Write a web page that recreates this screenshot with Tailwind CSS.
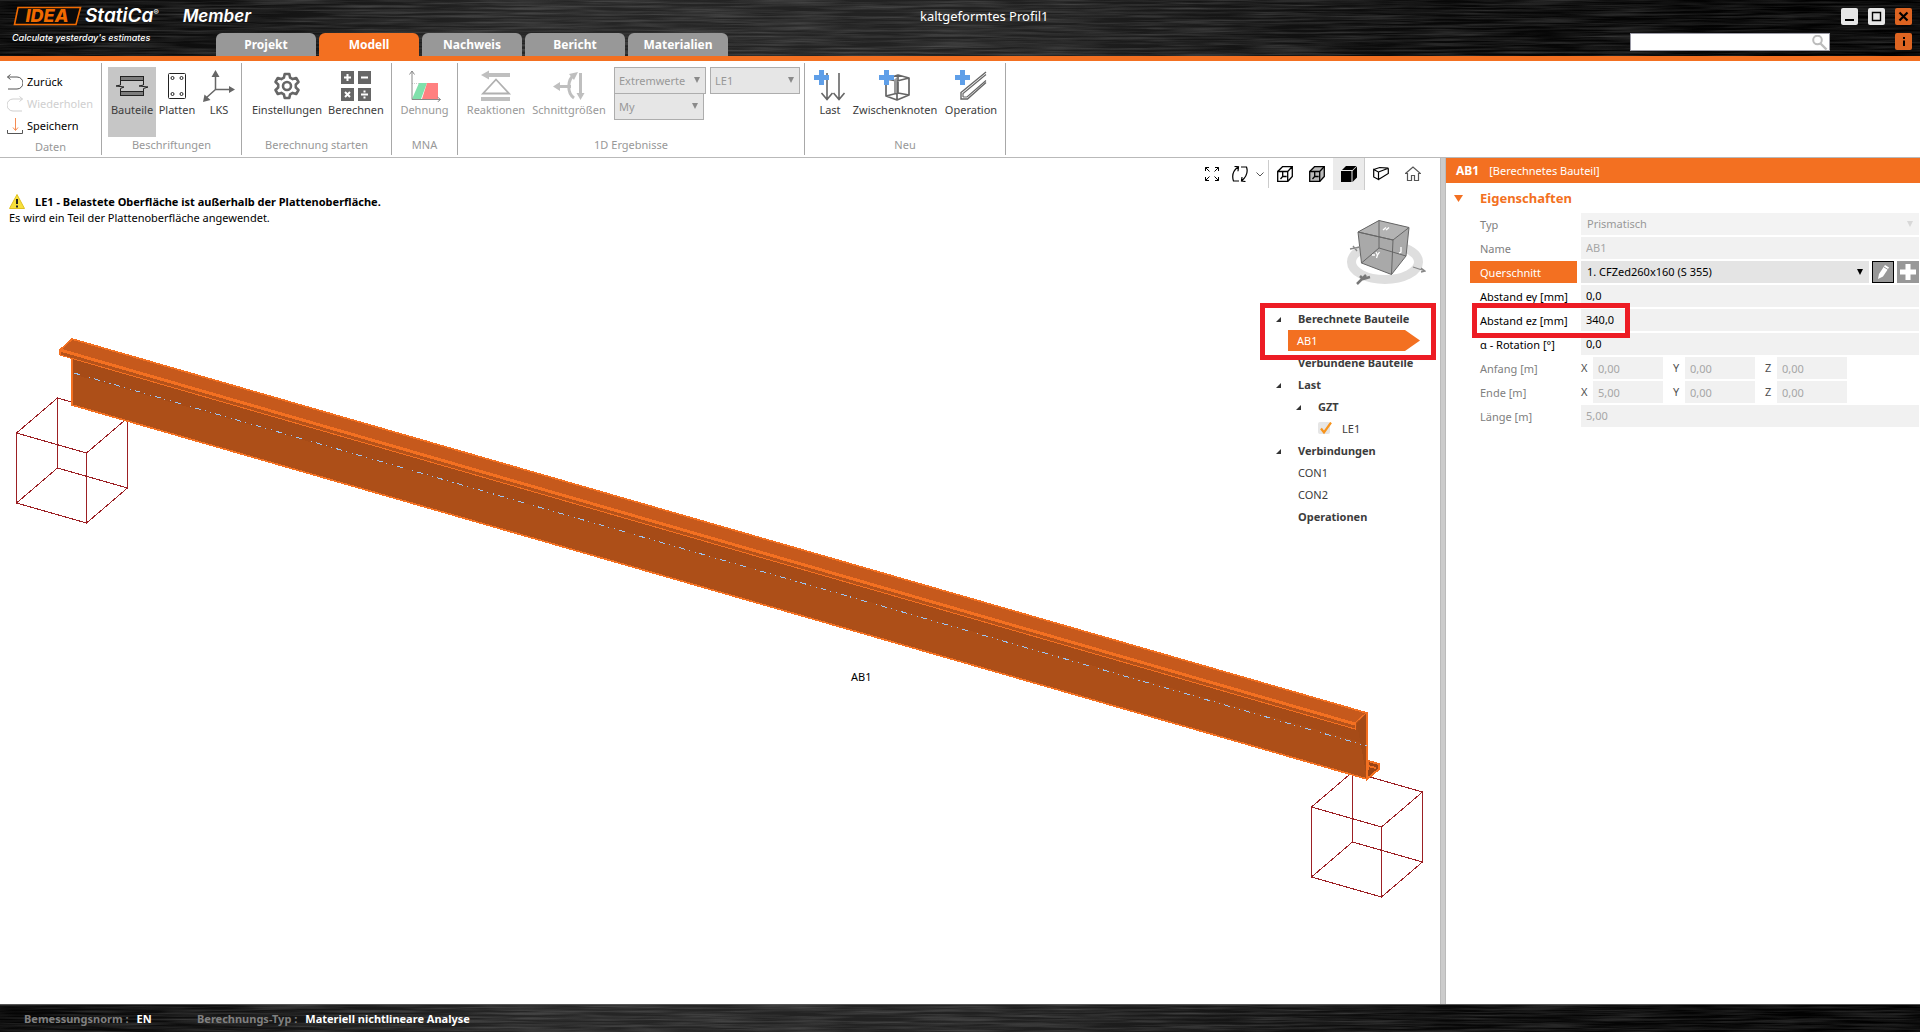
<!DOCTYPE html>
<html lang="de">
  <head>
    <meta charset="UTF-8" />
    <meta name="viewport" content="width=device-width, initial-scale=1.0" />
    <title>IDEA StatiCa Member</title>
    <script src="https://cdn.jsdelivr.net/npm/@tailwindcss/browser@4"></script>
  </head>
  <body class="h-screen flex flex-col overflow-hidden bg-white font-['Noto_Sans','Open_Sans',sans-serif] text-[11px] leading-4 text-[#3c3c3c]">

    <!-- Title bar -->
    <header class="relative shrink-0 h-[61px] flex bg-black border-b-5 border-[#f37021] text-white">
      <svg class="absolute inset-0 w-full h-full" aria-hidden="true">
        <defs>
          <filter id="brushed" x="0" y="0" width="100%" height="100%">
            <feTurbulence type="fractalNoise" baseFrequency="0.012 0.5" numOctaves="3" seed="4" />
            <feColorMatrix values="0 0 0 0 1  0 0 0 0 1  0 0 0 0 1  1.3 0 0 0 -0.45" />
          </filter>
          <linearGradient id="sheen">
            <stop offset="0" stop-color="#040404" />
            <stop offset="0.12" stop-color="#101010" />
            <stop offset="0.27" stop-color="#262626" />
            <stop offset="0.55" stop-color="#202020" />
            <stop offset="0.75" stop-color="#080808" />
            <stop offset="1" stop-color="#000000" />
          </linearGradient>
        </defs>
        <rect width="100%" height="100%" fill="url(#sheen)" />
        <rect width="100%" height="100%" filter="url(#brushed)" opacity="0.25" />
      </svg>

      <div class="relative w-[216px] pl-3 pt-1.5">
        <div class="flex items-center h-5 whitespace-nowrap font-[Inter,sans-serif] italic font-semibold">
          <div class="relative shrink-0 w-[70px] h-5">
            <svg class="absolute inset-0 w-[70px] h-5" viewBox="0 0 70 20">
              <path d="M6 1.500H68.500L64 18.500H2.500z" fill="#0a0a0a" stroke="#f06a00" stroke-width="1.600" />
            </svg>
            <span class="relative block text-center text-[18px] leading-5 font-extrabold text-[#f06a00]">IDEA</span>
          </div>
          <span class="ml-[3px] text-[19px] leading-5">StatiCa</span><sup class="text-[8px]">®</sup>
          <span class="ml-6 text-[17px] leading-5">Member</span>
        </div>
        <p class="mt-1 text-[9px] leading-4 italic font-medium font-[Inter,sans-serif]">Calculate yesterday's estimates</p>
      </div>

      <nav class="relative flex items-end gap-[3px] font-bold text-[12px] text-center">
        <a href="#" class="w-[100px] h-[23px] pt-1 rounded-t-md bg-[#989898]">Projekt</a>
        <a href="#" class="w-[100px] h-[23px] pt-1 rounded-t-md bg-[#f37021]">Modell</a>
        <a href="#" class="w-[100px] h-[23px] pt-1 rounded-t-md bg-[#989898]">Nachweis</a>
        <a href="#" class="w-[100px] h-[23px] pt-1 rounded-t-md bg-[#989898]">Bericht</a>
        <a href="#" class="w-[100px] h-[23px] pt-1 rounded-t-md bg-[#989898]">Materialien</a>
      </nav>

      <h1 class="relative flex-1 pl-[192px] pt-2 text-[13px]">kaltgeformtes Profil1</h1>

      <div class="relative w-[290px] pr-2 pt-2 flex flex-col gap-2">
        <div class="flex justify-end gap-2.5">
          <button class="size-[17px] rounded-xs bg-[#e6e6e6]" aria-label="Minimieren">
            <svg viewBox="0 0 17 17"><path d="M4 12h9" stroke="#000" stroke-width="2" /></svg>
          </button>
          <button class="size-[17px] rounded-xs bg-[#e6e6e6]" aria-label="Maximieren">
            <svg viewBox="0 0 17 17"><path d="M4.500 4.500h8v8h-8z" fill="none" stroke="#000" stroke-width="1.400" /></svg>
          </button>
          <button class="size-[17px] rounded-xs bg-[#dd6421]" aria-label="Schließen">
            <svg viewBox="0 0 17 17"><path d="M4.500 4.500l8 8M12.500 4.500l-8 8" stroke="#000" stroke-width="2.200" /></svg>
          </button>
        </div>
        <div class="flex justify-between">
          <div class="relative w-[200px]">
            <input type="text" aria-label="Suche" class="block w-full h-[18px] pl-1 pr-5 bg-white border border-[#9a9aa5] text-black" />
            <svg class="absolute right-0.5 top-0.5 size-4" viewBox="0 0 16 16" fill="none" stroke="#bcbcbc">
              <circle cx="5.500" cy="5" r="4.300" stroke-width="2" /><path d="M8.500 8.500l6 6" stroke-width="2.400" />
            </svg>
          </div>
          <button class="size-[17px] rounded-xs bg-[#dd6421]" aria-label="Info">
            <svg viewBox="0 0 17 17"><path d="M8 4h2v2H8zM8 7.500h2V13H8z" fill="#000" /></svg>
          </button>
        </div>
      </div>
    </header>

    <!-- Ribbon -->
    <section class="shrink-0 h-[97px] pt-0.5 pb-[2px] flex border-b border-[#b9b9b9]">
      <div class="w-[102px] flex flex-col justify-between border-r border-[#a8a8a8] pt-[11px]">
        <div class="flex flex-col gap-1.5 pl-[7px] text-black">
          <button class="flex items-center gap-1 h-4">
            <svg class="size-4" viewBox="0 0 16 16" fill="none" stroke="#555"><path d="M.5 3H10a5.500 5.500 0 0 1 0 12H1M3.500 .5L.5 3l3 2.500" /></svg>
            Zurück
          </button>
          <button class="flex items-center gap-1 h-4 text-[#cfcfcf]" disabled>
            <svg class="size-4" viewBox="0 0 16 16" fill="none" stroke="#cfcfcf"><path d="M15.500 3H6a5.500 5.500 0 0 0 0 12H15M12.500 .5l3 2.500l-3 2.500" /></svg>
            Wiederholen
          </button>
          <button class="flex items-center gap-1 h-4">
            <svg class="size-4" viewBox="0 0 16 16" fill="none"><path d="M.5 12v3.500h15V12" stroke="#555" /><path d="M8.500 0v12M6 9.500l2.500 3l2.500-3" stroke="#f58b52" /></svg>
            Speichern
          </button>
        </div>
        <p class="text-center text-[#989898]">Daten</p>
      </div>

      <div class="w-[140px] flex flex-col justify-between border-r border-[#a8a8a8] pt-1">
        <div class="flex pl-1.5">
          <button class="w-12 h-[70px] pt-[3px] flex flex-col items-center bg-[#c6c6c6]">
            <svg class="size-8" viewBox="0 0 32 32">
              <path d="M4 6h24v5H4zM4 21h24v5H4z" fill="#7d7d7d" />
              <path d="M4 6.500h24M4 10.500h24M4 21.500h24M4 25.500h24M4.500 6v5M27.500 6v5M4.500 21v5M27.500 21v5" stroke="#222" />
              <path d="M4.500 11v4L0 16l8 1-3.500 1.500V21M27.500 11v4L23 16l9 1-4.500 1.500V21" fill="none" stroke="#222" />
            </svg>
            Bauteile
          </button>
          <button class="w-[42px] h-[70px] pt-[3px] flex flex-col items-center">
            <svg class="size-8" viewBox="0 0 32 32" fill="none" stroke="#222">
              <rect x="7.500" y="3.500" width="17" height="25" rx="1" />
              <circle cx="11.500" cy="8" r="1.500" /><circle cx="20.500" cy="8" r="1.500" /><circle cx="11.500" cy="24" r="1.500" /><circle cx="20.500" cy="24" r="1.500" />
            </svg>
            Platten
          </button>
          <button class="w-[42px] h-[70px] pt-[3px] flex flex-col items-center">
            <svg class="size-8" viewBox="0 0 32 32">
              <path d="M12.500 4v15.500H28M12.500 19.500L3 28" fill="none" stroke="#666" stroke-width="1.500" />
              <path d="M12.500 0l4 7h-8zM32 19.500l-6-3.500v7zM0 32l1.500-7.500 6 5.500z" fill="#666" />
            </svg>
            LKS
          </button>
        </div>
        <p class="h-[18px] text-center text-[#989898]">Beschriftungen</p>
      </div>

      <div class="w-[150px] flex flex-col justify-between border-r border-[#a8a8a8] pt-1">
        <div class="flex pl-[5px]">
          <button class="w-20 h-[70px] pt-[3px] flex flex-col items-center">
            <svg class="size-8" viewBox="0 0 32 32" fill="none" stroke="#666" stroke-width="2.600" stroke-linejoin="round">
              <path d="M13.700 4h4.600l.8 3.600 2.600 1.500 3.500-1.100 2.300 4-2.700 2.500v3l2.700 2.500-2.300 4-3.500-1.100-2.600 1.500-.8 3.600h-4.600l-.8-3.600-2.600-1.500L6.800 24l-2.300-4 2.700-2.500v-3L4.500 12l2.300-4 3.500 1.100 2.600-1.500z" />
              <circle cx="16" cy="16" r="4" />
            </svg>
            Einstellungen
          </button>
          <button class="w-[58px] h-[70px] pt-[3px] flex flex-col items-center">
            <svg class="size-8" viewBox="0 0 32 32">
              <path d="M1 1h13v13H1zM18 1h13v13H18zM1 18h13v13H1zM18 18h13v13H18z" fill="#666" />
              <path d="M7.500 4v7M4 7.500h7M21 7.500h7M5 22l5 5M10 22l-5 5M21 24.500h7" stroke="#fff" stroke-width="2" />
              <path d="M23.500 20.500h2v2h-2zM23.500 26.500h2v2h-2z" fill="#fff" />
            </svg>
            Berechnen
          </button>
        </div>
        <p class="h-[18px] text-center text-[#989898]">Berechnung starten</p>
      </div>

      <div class="w-[66px] flex flex-col justify-between border-r border-[#a8a8a8] pt-1">
        <button class="h-[70px] pt-[3px] flex flex-col items-center text-[#989898]" disabled>
          <svg class="size-8" viewBox="0 0 32 32">
            <path d="M10 13h8L12 29H3z" fill="#7fe0ab" /><path d="M18 13h11v16H13z" fill="#ff8080" />
            <path d="M3 13.500h8" stroke="#ccc" stroke-dasharray="1" />
            <path d="M3 29.500V1M.5 4.500L3 1l2.500 3.500M3 29.500h28.500M28.500 27l3 2.500-3 2.500" fill="none" stroke="#888" />
          </svg>
          Dehnung
        </button>
        <p class="h-[18px] text-center text-[#989898]">MNA</p>
      </div>

      <div class="w-[347px] flex flex-col justify-between border-r border-[#a8a8a8] pt-1">
        <div class="flex pl-1 text-[#989898]">
          <button class="w-[68px] h-[70px] pt-[3px] flex flex-col items-center" disabled>
            <svg class="size-8" viewBox="0 0 32 32">
              <path d="M1 5l8-4.500V3h21v4H9v2.500zM1 27h29v4H1z" fill="#bfbfbf" />
              <path d="M16 9.500L29 23.500H3z" fill="none" stroke="#b0b0b0" stroke-width="1.800" />
            </svg>
            Reaktionen
          </button>
          <button class="w-[78px] h-[70px] pt-[3px] flex flex-col items-center" disabled>
            <svg class="size-8" viewBox="0 0 32 32">
              <path d="M5 16.500h13M21 5c-7 5-7 18 0 23" fill="none" stroke="#bfbfbf" stroke-width="3" />
              <path d="M0 16.500l7-4.500v9zM16 4l9-2-4 8z" fill="#bfbfbf" />
              <path d="M27.500 3v22" stroke="#bfbfbf" stroke-width="3" /><path d="M23.500 23h8l-4 7z" fill="#bfbfbf" />
            </svg>
            Schnittgrößen
          </button>
          <div class="flex gap-1 pl-1.5">
            <div class="flex flex-col">
              <div class="relative w-[92px]">
                <select aria-label="Extremwerte" class="block w-full h-[27px] pl-1 appearance-none bg-[#e6e6e6] border border-[#adadad] text-[#989898]" disabled><option>Extremwerte</option></select>
                <svg class="absolute right-1.5 top-2.5 w-1.5 h-1.5" viewBox="0 0 6 6"><path d="M0 0h6L3 6z" fill="#8a8a8a" /></svg>
              </div>
              <div class="relative w-[90px] -mt-px">
                <select aria-label="Ergebnis" class="block w-full h-[27px] pl-1 appearance-none bg-[#e6e6e6] border border-[#adadad] text-[#989898]" disabled><option>My</option></select>
                <svg class="absolute right-1.5 top-2.5 w-1.5 h-1.5" viewBox="0 0 6 6"><path d="M0 0h6L3 6z" fill="#8a8a8a" /></svg>
              </div>
            </div>
            <div class="relative w-[90px]">
              <select aria-label="Lastfall" class="block w-full h-[27px] pl-1 appearance-none bg-[#e6e6e6] border border-[#adadad] text-[#989898]" disabled><option>LE1</option></select>
              <svg class="absolute right-1.5 top-2.5 w-1.5 h-1.5" viewBox="0 0 6 6"><path d="M0 0h6L3 6z" fill="#8a8a8a" /></svg>
            </div>
          </div>
        </div>
        <p class="h-[18px] text-center text-[#989898]">1D Ergebnisse</p>
      </div>

      <div class="w-[201px] flex flex-col justify-between border-r border-[#a8a8a8] pt-1">
        <div class="flex pl-[3px]">
          <button class="w-11 h-[70px] pt-[3px] flex flex-col items-center">
            <svg class="size-8" viewBox="0 0 32 32">
              <path d="M13 3v26M7.500 23l5.500 6.500 5.500-6.500M25 3v26M19.500 23l5.500 6.500 5.500-6.500" fill="none" stroke="#666" stroke-width="1.600" />
              <path d="M5 0h5v5h5v5h-5v5H5v-5H0V5h5z" fill="#5f9fe8" />
            </svg>
            Last
          </button>
          <button class="w-[86px] h-[70px] pt-[3px] flex flex-col items-center">
            <svg class="size-8" viewBox="0 0 32 32">
              <path d="M7 9l12-4 11 3v17l-12 5-11-4zM18 11V30M7 9l11 2 12-3M19 5v18M7 26l12-3 11 2" fill="none" stroke="#666" stroke-width="1.700" stroke-linejoin="round" />
              <path d="M15 10l3-3v16h-3z" fill="#999" />
              <path d="M5 0h5v5h5v5h-5v5H5v-5H0V5h5z" fill="#5f9fe8" />
            </svg>
            Zwischenknoten
          </button>
          <button class="w-[66px] h-[70px] pt-[3px] flex flex-col items-center">
            <svg class="size-8" viewBox="0 0 32 32" fill="none" stroke="#666">
              <path d="M31 2L6 22.500v6.500h6.500L31 12.500" stroke-width="1.400" />
              <path d="M31 4.500L8 23.500v3.500M31 10.500L12 27H8" stroke-width="1.200" />
              <path d="M5 0h5v5h5v5h-5v5H5v-5H0V5h5z" fill="#5f9fe8" stroke="none" />
            </svg>
            Operation
          </button>
        </div>
        <p class="h-[18px] text-center text-[#989898]">Neu</p>
      </div>
    </section>

    <main class="flex-1 min-h-0 flex">
      <!-- 3D scene -->
      <section class="relative flex-1 flex justify-between">
        <svg class="absolute inset-0 w-full h-full" viewBox="0 158 1440 845" preserveAspectRatio="xMinYMin meet" shape-rendering="crispEdges">
          <!-- supports -->
          <g fill="none" stroke="#9c2024">
            <path d="M16.500 433l70 20v70l-70-20zM57.500 398l70 20v70l-70-20zM16.500 433l41-35M86.500 453l41-35M86.500 523l41-35M16.500 503l41-35" />
            <path d="M1311.500 807l70 20v70l-70-20zM1352.500 772l70 20v70l-70-20zM1311.500 807l41-35M1381.500 827l41-35M1381.500 897l41-35M1311.500 877l41-35" />
          </g>
          <!-- beam -->
          <path d="M1368 761l11 3v5l-12 10z" fill="#9a4415" stroke="#f37021" stroke-width="2" />
          <path d="M1368 766l8 2" stroke="#f37021" stroke-width="2" />
          <path d="M72 357l1295 356v66L72 405z" fill="#ad4f18" />
          <path d="M72 355l1295 374v15L72 374z" fill="#a64b17" />
          <path d="M72 339l1295 374-12 11L60 350z" fill="#c6591c" />
          <path d="M60 350l1295 374v5L60 355z" fill="#b5521a" />
          <path d="M1357 724l10-11v66z" fill="#a34a16" />
          <g fill="none" stroke="#f37021">
            <path d="M60 355V350L72 339l1295 374v66L72 405v-47" stroke-width="1.700" />
            <path d="M60 350l1295 374" stroke-width="3" />
            <path d="M60 355l1295 374v-6l11-10" stroke-width="1" />
          </g>
          <path d="M74 373l1293 373" fill="none" stroke="#9cc4f0" stroke-dasharray="6 4 1 5 1 4" />
          <text x="851" y="681" font-size="11" fill="#000" shape-rendering="auto">AB1</text>
        </svg>

        <div class="relative pl-[9px] pt-9 text-black">
          <div class="flex items-center gap-2.5 font-bold">
            <svg class="size-4" viewBox="0 0 16 16"><path d="M8 .500L15.500 14.500H.5z" fill="#f7e03c" stroke="#e0c020" /><path d="M7 5h2v5H7zM7 11.500h2v2H7z" fill="#222" /></svg>
            LE1 - Belastete Oberfläche ist außerhalb der Plattenoberfläche.
          </div>
          <p>Es wird ein Teil der Plattenoberfläche angewendet.</p>
        </div>

        <div class="relative w-[240px]">
          <div class="flex items-center h-8 pl-1">
            <button class="w-4 h-4" aria-label="Alles zeigen">
              <svg viewBox="0 0 16 16" fill="none" stroke="#000"><path d="M1.500 5V1.500H5M1.500 1.500l4 4M11 1.500h3.500V5M14.500 1.500l-4 4M1.500 11v3.500H5M1.500 14.500l4-4M11 14.500h3.500V11M14.500 14.500l-4-4" /></svg>
            </button>
            <button class="ml-3 w-4 h-4" aria-label="Drehen">
              <svg viewBox="0 0 16 16" fill="none" stroke="#000" stroke-width="1.200"><path d="M7 15H1.500C-.5 9 2 4 6 1M2.500 .5L6.500 .700l-.5 4.500M9 1h5.500c2 6-.5 10-4.500 13.500M13.500 15.500l-4-.5.5-4" /></svg>
            </button>
            <button class="ml-2 w-2" aria-label="Mehr">
              <svg viewBox="0 0 8 8" fill="none" stroke="#555"><path d="M.5 2.500L4 6l3.500-3.500" /></svg>
            </button>
            <div class="ml-1 h-7 w-px bg-[#ccc]"></div>
            <button class="size-8 grid place-items-center" aria-label="Drahtmodell">
              <svg class="size-4" viewBox="0 0 16 16" fill="none" stroke="#000" stroke-width="1.300"><path d="M.7 5.500h10v10H.7zM.7 5.500l5-5h9.600l-4.600 5M15.300 .5v10l-4.600 5M5.700 6v4.500L3.500 13M5.700 10.500h4" /></svg>
            </button>
            <button class="size-8 grid place-items-center" aria-label="Transparent">
              <svg class="size-4" viewBox="0 0 16 16" fill="#bbb" stroke="#000" stroke-width="1.300"><path d="M.7 5.500l5-5h9.600v10l-4.600 5H.7z" /><path d="M.7 5.500h10v10M10.700 5.500l4.600-5M5.700 6v4.500L3.500 13M5.700 10.500h4" fill="none" /></svg>
            </button>
            <button class="size-8 grid place-items-center bg-[#ebebeb] border-r border-[#ccc]" aria-label="Schattiert">
              <svg class="size-4" viewBox="0 0 16 16"><path d="M0 5h10.500v11H0zM1 4l4-4h10.500l-4 4zM11.500 5L16 .5v11L11.500 16z" fill="#000" /></svg>
            </button>
            <button class="size-8 grid place-items-center" aria-label="Ansicht">
              <svg class="size-4" viewBox="0 0 16 16" fill="none" stroke="#000" stroke-width="1.200"><path d="M.7 3.500L5.500 6v7.500L.7 11zM.7 3.500l6-2 8.600.7L5.500 6M15.300 2.200v5.300L5.500 13.500" /></svg>
            </button>
            <button class="size-8 grid place-items-center" aria-label="Startansicht">
              <svg class="size-4" viewBox="0 0 16 16" fill="none" stroke="#555" stroke-width="1.200"><path d="M.5 7.500L8 1l7.500 6.500H13.500v7H9.500V9.500h-3v5H2.500v-7z" /></svg>
            </button>
          </div>

          <svg class="mt-7 ml-[146px] w-20 h-[70px]" viewBox="0 0 80 70">
            <ellipse cx="39" cy="44" rx="33.500" ry="17.500" fill="none" stroke="#dedede" stroke-width="9" />
            <path d="M12 14L33 2.500l30 7L60 38 45.500 56.500 15.500 45z" fill="#a9a9a9" />
            <path d="M12 14L33 2.500l30 7L47 22z" fill="#b3b3b3" />
            <path d="M12 14L33 2.500l30 7L60 38 45.500 56.500 15.500 45zL47 22 63 9.500M12 14L47 22 45.500 56.500M33 2.500V30L15.500 45M33 30l27 8" fill="none" stroke="#666" />
            <path d="M26 37h3M30 34l1.500 3 2-3M31.500 37l-1 3M55 29v5l-2 1M37 12l3-2.500M40 12l3-2.500" stroke="#fff" stroke-width="1.300" fill="none" />
            <path d="M11 66l9-9M14 58l3 3 7-2" fill="none" stroke="#777" stroke-width="2.500" />
            <path d="M4 31l10-2M7 28l4 5M67 49l12 4M75 50l4 3-4 1" fill="none" stroke="#888" stroke-width="1.300" />
          </svg>

          <ul class="mt-5 pl-[76px] font-bold">
            <li>
              <div class="flex items-center h-[22px] gap-[17px]"><svg class="size-[5px]" viewBox="0 0 5 5"><path d="M5 0v5H0z" fill="#333" /></svg>Berechnete Bauteile</div>
              <a href="#" class="ml-3 flex h-[22px] font-normal text-white">
                <span class="w-[117px] h-[21px] pl-[9px] pt-[3px] bg-[#f37021]">AB1</span>
                <svg class="w-[15px] h-[21px]" viewBox="0 0 15 21"><path d="M0 0l15 10.500L0 21z" fill="#f37021" /></svg>
              </a>
            </li>
            <li class="pl-[22px] h-[22px] pt-[3px]">Verbundene Bauteile</li>
            <li>
              <div class="flex items-center h-[22px] gap-[17px]"><svg class="size-[5px]" viewBox="0 0 5 5"><path d="M5 0v5H0z" fill="#333" /></svg>Last</div>
              <div class="flex items-center h-[22px] gap-[17px] pl-5"><svg class="size-[5px]" viewBox="0 0 5 5"><path d="M5 0v5H0z" fill="#333" /></svg>GZT</div>
              <label class="flex items-center h-[22px] gap-2.5 pl-[42px] font-normal">
                <span class="relative size-3.5">
                  <input type="checkbox" class="block appearance-none size-3 rounded-xs bg-[#e6e6e6]" checked />
                  <svg class="absolute inset-0 size-3.5" viewBox="0 0 14 14"><path d="M3 6.500l3 4L13 .5" fill="none" stroke="#f7941d" stroke-width="2.200" /></svg>
                </span>
                LE1
              </label>
            </li>
            <li>
              <div class="flex items-center h-[22px] gap-[17px]"><svg class="size-[5px]" viewBox="0 0 5 5"><path d="M5 0v5H0z" fill="#333" /></svg>Verbindungen</div>
              <div class="h-[22px] pl-[22px] pt-[3px] font-normal">CON1</div>
              <div class="h-[22px] pl-[22px] pt-[3px] font-normal">CON2</div>
            </li>
            <li class="pl-[22px] h-[22px] pt-[3px]">Operationen</li>
          </ul>
          <div class="absolute left-[60px] top-[145px] w-[176px] h-[57px] border-5 border-[#ed1c24]"></div>
        </div>
      </section>

      <div class="w-1.5 bg-[#cbcbcb] border-x border-[#bababa]"></div>

      <!-- Properties -->
      <aside class="w-[474px]">
        <h2 class="h-[25px] pl-2.5 pt-[5px] flex gap-2.5 bg-[#f37021] text-white"><b class="text-[12px]">AB1</b> [Berechnetes Bauteil]</h2>
        <h3 class="h-[30px] pl-2 flex items-center gap-[17px] text-[13px] font-bold text-[#f37021]">
          <svg class="w-[9px] h-[7px]" viewBox="0 0 9 7"><path d="M0 0h9L4.500 7z" fill="#f37021" /></svg>
          Eigenschaften
        </h3>
        <div class="relative flex flex-col gap-0.5 pl-6 pr-px text-black">
          <div class="flex h-[22px] gap-1 text-[#808080]">
            <label for="typ" class="w-[107px] pl-2.5 pt-1">Typ</label>
            <div class="relative flex-1">
              <select id="typ" class="block w-full h-full pl-1.5 appearance-none bg-[#f3f3f3] text-[#989898]" disabled><option>Prismatisch</option></select>
              <svg class="absolute right-1.5 top-2 w-1.5 h-1.5" viewBox="0 0 6 6"><path d="M0 0h6L3 6z" fill="#d8d8d8" /></svg>
            </div>
          </div>
          <div class="flex h-[22px] gap-1 text-[#808080]">
            <label for="name" class="w-[107px] pl-2.5 pt-1">Name</label>
            <input id="name" value="AB1" class="flex-1 pl-[5px] bg-[#f1f1f1] text-[#a6a6a6]" disabled />
          </div>
          <div class="flex h-[22px] gap-1">
            <label for="cs" class="w-[107px] pl-2.5 pt-1 bg-[#f37021] text-white">Querschnitt</label>
            <div class="flex flex-1 gap-[3px]">
              <div class="relative flex-1">
                <select id="cs" class="block w-full h-full pl-1.5 appearance-none bg-[#e4e4e4]"><option>1. CFZed260x160 (S 355)</option></select>
                <svg class="absolute right-1.5 top-2 w-1.5 h-1.5" viewBox="0 0 6 6"><path d="M0 0h6L3 6z" fill="#000" /></svg>
              </div>
              <button class="size-[22px] bg-[#989898] border border-black" aria-label="Bearbeiten">
                <svg viewBox="0 0 20 20"><path d="M5 17l1-5 6-9 4 2.500-6 9z" fill="#fff" /><path d="M11 5l4 2.500" stroke="#989898" /></svg>
              </button>
              <button class="size-[22px] bg-[#989898]" aria-label="Neu">
                <svg viewBox="0 0 22 22"><path d="M11 3v16M3 11h16" stroke="#fff" stroke-width="5" /></svg>
              </button>
            </div>
          </div>
          <div class="flex h-[22px] gap-1">
            <label for="ey" class="w-[107px] pl-2.5 pt-1">Abstand ey [mm]</label>
            <input id="ey" value="0,0" class="flex-1 pl-[5px] bg-[#f1f1f1]" />
          </div>
          <div class="flex h-[22px] gap-1">
            <label for="ez" class="w-[107px] pl-2.5 pt-1">Abstand ez [mm]</label>
            <input id="ez" value="340,0" class="flex-1 pl-[5px] bg-[#f1f1f1]" />
          </div>
          <div class="flex h-[22px] gap-1">
            <label for="rot" class="w-[107px] pl-2.5 pt-1">α - Rotation [°]</label>
            <input id="rot" value="0,0" class="flex-1 pl-[5px] bg-[#f1f1f1]" />
          </div>
          <div class="flex h-[22px] gap-1 text-[#808080]">
            <span class="w-[107px] pl-2.5 pt-1">Anfang [m]</span>
            <label class="flex items-center w-[88px] text-[#505050]"><span class="w-3">X</span><input value="0,00" class="w-[70px] h-full pl-[5px] bg-[#f1f1f1] text-[#a6a6a6]" disabled /></label>
            <label class="flex items-center w-[88px] text-[#505050]"><span class="w-3">Y</span><input value="0,00" class="w-[70px] h-full pl-[5px] bg-[#f1f1f1] text-[#a6a6a6]" disabled /></label>
            <label class="flex items-center w-[88px] text-[#505050]"><span class="w-3">Z</span><input value="0,00" class="w-[70px] h-full pl-[5px] bg-[#f1f1f1] text-[#a6a6a6]" disabled /></label>
          </div>
          <div class="flex h-[22px] gap-1 text-[#808080]">
            <span class="w-[107px] pl-2.5 pt-1">Ende [m]</span>
            <label class="flex items-center w-[88px] text-[#505050]"><span class="w-3">X</span><input value="5,00" class="w-[70px] h-full pl-[5px] bg-[#f1f1f1] text-[#a6a6a6]" disabled /></label>
            <label class="flex items-center w-[88px] text-[#505050]"><span class="w-3">Y</span><input value="0,00" class="w-[70px] h-full pl-[5px] bg-[#f1f1f1] text-[#a6a6a6]" disabled /></label>
            <label class="flex items-center w-[88px] text-[#505050]"><span class="w-3">Z</span><input value="0,00" class="w-[70px] h-full pl-[5px] bg-[#f1f1f1] text-[#a6a6a6]" disabled /></label>
          </div>
          <div class="flex h-[22px] gap-1 text-[#808080]">
            <label for="len" class="w-[107px] pl-2.5 pt-1">Länge [m]</label>
            <input id="len" value="5,00" class="flex-1 pl-[5px] bg-[#f1f1f1] text-[#a6a6a6]" disabled />
          </div>
          <div class="absolute left-[26px] top-[90px] w-[158px] h-[35px] border-5 border-[#ed1c24]"></div>
        </div>
      </aside>
    </main>

    <footer class="relative shrink-0 h-7 flex items-center pl-6 bg-black border-t border-[#555] font-bold text-white">
      <svg class="absolute inset-0 w-full h-full" aria-hidden="true">
        <rect width="100%" height="100%" fill="url(#sheen)" />
        <rect width="100%" height="100%" filter="url(#brushed)" opacity="0.25" />
      </svg>
      <p class="relative flex gap-2 w-[173px]"><span class="text-[#808080]">Bemessungsnorm :</span> EN</p>
      <p class="relative flex gap-2"><span class="text-[#808080]">Berechnungs-Typ :</span> Materiell nichtlineare Analyse</p>
    </footer>
  </body>
</html>
